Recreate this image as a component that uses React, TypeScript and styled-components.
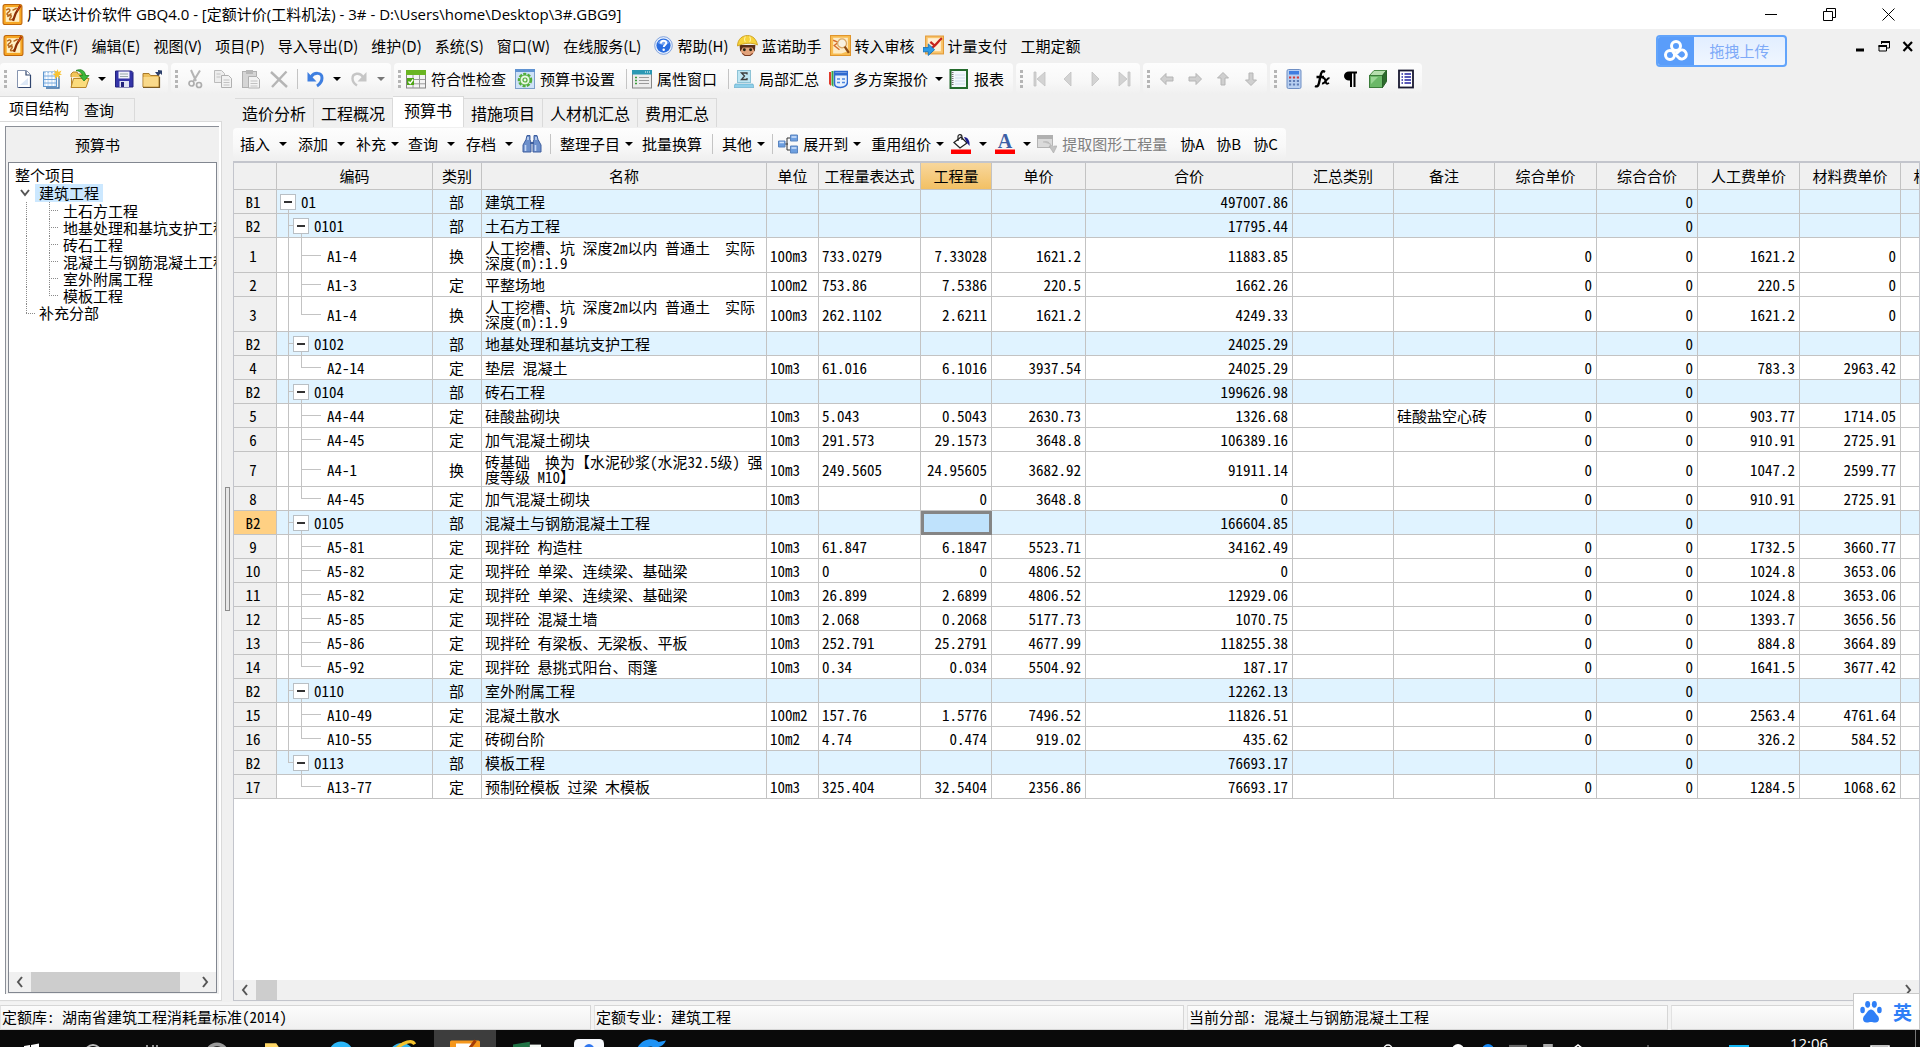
import React from "react";
import styled, { createGlobalStyle, css } from "styled-components";

const UI_FONT = '"Noto Sans CJK SC", "Noto Sans", sans-serif';
const GRID_FONT = '"Noto Sans Mono CJK SC", "Noto Sans CJK SC", monospace';
const LINE = "#c3c3c3";

const Global = createGlobalStyle`
  html, body { margin: 0; padding: 0; }
  body { background: #f0f0f0; color: #000; font: 15px/20px ${UI_FONT}; overflow: hidden; }
  *, *::before, *::after { box-sizing: border-box; }
  button { margin: 0; padding: 0; border: 0; background: none; color: inherit; font: inherit; white-space: nowrap; }
  svg { display: block; flex: none; }
`;

const Shell = styled.div`
  position: relative;
  display: flex;
  flex-direction: column;
  height: 100vh;
  overflow: hidden;
`;

/* ---------- title and menu ---------- */

const TitleBar = styled.header`
  flex: none;
  display: flex;
  align-items: center;
  height: 29px;
  padding-left: 2px;
  background: #fff;
`;
const Title = styled.h1`
  flex: 1;
  margin: 0 0 0 4px;
  padding-bottom: 1px;
  font: 400 15px/28px "Open Sans", ${UI_FONT};
  white-space: pre;
`;
const WindowButton = styled.button`
  display: flex;
  align-items: center;
  justify-content: center;
  width: 59px;
  height: 28px;
`;
const WindowButtons = styled.div`
  display: flex;
  padding-right: 2px;
`;
const MenuBar = styled.nav`
  flex: none;
  display: flex;
  align-items: center;
  height: 34px;
  padding: 0 0 1px 3px;
`;
const MenuItem = styled.button<{ $icon?: boolean }>`
  display: flex;
  align-items: center;
  gap: 4px;
  height: 24px;
  padding: 0 ${(p) => (p.$icon ? "2px" : "7px")} 0 6px;
`;
const MdiButtons = styled.div`
  display: flex;
  gap: 12px;
  margin-left: auto;
  padding-right: 6px;
`;
const MdiButton = styled.button`
  width: 12px;
  height: 14px;
`;
const UploadButton = styled.button`
  position: absolute;
  top: 35px;
  right: 133px;
  display: flex;
  width: 131px;
  height: 32px;
  border: 2px solid #62a4fb;
  border-radius: 4px;
  overflow: hidden;
  background: linear-gradient(#e2eeff, #f0f6ff);
  color: #7eaaf8;
  line-height: 28px;
`;
const UploadMark = styled.span`
  display: flex;
  align-items: center;
  justify-content: center;
  width: 36px;
  height: 28px;
  background: #5a9dfa;
`;
const UploadText = styled.span`
  flex: 1;
  text-align: center;
`;

/* ---------- tool bars ---------- */

const ToolRow = styled.div`
  flex: none;
  display: flex;
  gap: 3px;
  height: 33px;
`;
const ToolGroup = styled.div<{ $flush?: boolean }>`
  display: flex;
  align-items: center;
  height: 31px;
  padding: 0 2px 0 ${(p) => (p.$flush ? "1px" : "2px")};
  border-radius: 4px;
  background: linear-gradient(#fdfdfd, #f8f8f8 60%, #f0f0f0);
`;
const Grip = styled.span`
  width: 8px;
  height: 18px;
  background: repeating-linear-gradient(#b5b5b5 0 3px, transparent 3px 5px) 2px 0 / 3px 100% no-repeat;
`;
const Divider = styled.span`
  width: 8px;
  height: 20px;
  background: linear-gradient(#c4c4c4, #c4c4c4) 4px 0 / 1px 100% no-repeat;
`;
const IconButton = styled.button`
  display: flex;
  align-items: center;
  justify-content: center;
  width: 28px;
  height: 28px;
`;
const CaretButton = styled.button<{ $dim?: boolean }>`
  display: flex;
  align-items: center;
  justify-content: center;
  width: 16px;
  height: 28px;
  color: ${(p) => (p.$dim ? "#777" : "#000")};
`;
const LabelButton = styled.button<{ $dim?: boolean; $menu?: "near" | "far" }>`
  display: flex;
  align-items: center;
  gap: 5px;
  height: 28px;
  padding: 0 ${(p) => (p.$menu ? "4px" : "7px")} 0 2px;
  color: ${(p) => (p.$dim ? "#808080" : "#000")};
  svg:last-child { margin-left: ${(p) => (p.$menu === "far" ? "2px" : "0")}; }
`;
const TextButton = styled.button<{ $menu?: "near" | "far" }>`
  display: flex;
  align-items: center;
  height: 28px;
  padding: 0 ${(p) => (p.$menu ? "0" : "6px")} 0 6px;
  svg { margin: 0 ${(p) => (p.$menu === "far" ? "5px 0 9px" : "3px 0 5px")}; }
`;

/* ---------- body ---------- */

const Body = styled.div`
  flex: 1;
  min-height: 0;
  display: flex;
  padding-bottom: 1px;
`;
const Side = styled.aside`
  flex: none;
  display: flex;
  flex-direction: column;
  width: 222px;
`;
const SideTabs = styled.div`
  display: flex;
  align-items: flex-end;
  height: 25px;
`;
const SideTab = styled.button<{ $active?: boolean }>`
  height: ${(p) => (p.$active ? "25px" : "23px")};
  padding: ${(p) => (p.$active ? "0 9px 2px" : "0 20px 0 5px")};
  border: 1px solid #dadada;
  border-bottom: 0;
  border-left-width: 0;
  background: ${(p) => (p.$active ? "#fff" : "#f0f0f0")};
  font: 15px/20px ${GRID_FONT};
`;
const SidePane = styled.div`
  flex: 1;
  min-height: 0;
  display: flex;
  padding: 4px 2px 6px 5px;
  border: 1px solid #dadada;
  border-left: 0;
  background: #fff;
`;
const SideInner = styled.div`
  flex: 1;
  min-width: 0;
  display: flex;
  flex-direction: column;
  padding: 0 2px 1px 2px;
  border-left: 1px solid #8b8f97;
  border-top: 1px solid #8b8f97;
  background: #f0f0f0;
`;
const SideHeading = styled.h2`
  flex: none;
  margin: 0;
  padding-right: 30px;
  font: 400 15px/35px ${UI_FONT};
  text-align: center;
`;
const TreeBox = styled.div`
  flex: 1;
  display: flex;
  flex-direction: column;
  min-height: 0;
  border: 1px solid #828790;
  background: #fff;
  font: 15px/18px ${GRID_FONT};
`;
const Tree = styled.ul`
  flex: 1;
  margin: 0;
  padding: 3px 0 0;
  overflow: hidden;
  list-style: none;
`;
const dots = (dir: string) => `repeating-linear-gradient(${dir}, #8a8a8a 0 1px, transparent 1px 2px)`;
const TreeRow = styled.li<{ $level: number; $last?: boolean }>`
  display: flex;
  height: ${(p) => (p.$level === 2 ? "17px" : "18px")};
  line-height: ${(p) => (p.$level === 2 ? "17px" : "18px")};
  padding-left: ${(p) => [2, 26, 50][p.$level]}px;
  white-space: nowrap;
  ${(p) =>
    p.$level === 1 && p.$last && css`
      background: ${dots("180deg")} 17px 0 / 1px 50% no-repeat, ${dots("90deg")} 17px 50% / 10px 1px no-repeat;
    `}
  ${(p) =>
    p.$level === 2 && css`
      background: ${dots("180deg")} 17px 0 / 1px 100% no-repeat,
        ${dots("180deg")} 40px 0 / 1px ${p.$last ? "50%" : "100%"} no-repeat,
        ${dots("90deg")} 40px 50% / 10px 1px no-repeat;
    `}
`;
const TreeLabel = styled.button<{ $selected?: boolean }>`
  height: 100%;
  padding: 0 4px;
  line-height: inherit;
  background: ${(p) => (p.$selected ? "#cce8ff" : "transparent")};
`;
const TreeOpener = styled.button`
  width: 14px;
  margin-left: -16px;
  margin-right: 2px;
`;
const ScrollBar = styled.div`
  flex: none;
  display: flex;
  align-items: center;
  height: 20px;
  background: #f0f0f0;
`;
const ScrollArrow = styled.button<{ $end?: boolean }>`
  display: flex;
  align-items: center;
  justify-content: center;
  width: 22px;
  height: 20px;
  margin-left: ${(p) => (p.$end ? "auto" : "0")};
`;
const ScrollThumb = styled.div<{ $share: string }>`
  width: ${(p) => p.$share};
  height: 100%;
  background: #cdcdcd;
`;
const Splitter = styled.div`
  flex: none;
  display: flex;
  align-items: center;
  justify-content: center;
  width: 11px;
`;
const SplitHandle = styled.div`
  width: 5px;
  height: 124px;
  border: 1px solid #8c8c8c;
  background: #e6e6e6;
`;
const Main = styled.main`
  flex: 1;
  min-width: 0;
  display: flex;
  flex-direction: column;
`;
const MainTabs = styled.div`
  flex: none;
  display: flex;
  align-items: flex-end;
  height: 31px;
  margin-bottom: 1px;
  padding-left: 2px;
`;
const MainTab = styled.button<{ $active?: boolean }>`
  height: ${(p) => (p.$active ? "31px" : "29px")};
  padding: ${(p) => (p.$active ? "0 11px 5px" : "0 7px")};
  border: 1px solid #dadada;
  border-left-width: 0;
  border-bottom: 0;
  background: ${(p) => (p.$active ? "#fff" : "#f0f0f0")};
  font: 16px/20px ${UI_FONT};
`;

/* ---------- grid ---------- */

const GridFrame = styled.section`
  flex: 1;
  min-height: 0;
  display: flex;
  flex-direction: column;
  border: 1px solid #c3c5cc;
  border-top-width: 2px;
  background: #fff;
`;
const GridView = styled.div`
  flex: 1;
  min-height: 0;
  overflow: hidden;
`;
const Sheet = styled.table`
  table-layout: fixed;
  width: 1768px;
  border-spacing: 0;
  font: 15px/15px ${GRID_FONT};
  white-space: pre;
`;
const HeadCell = styled.th<{ $active?: boolean }>`
  height: 27px;
  padding: 0 0 1px;
  border-right: 1px solid ${LINE};
  border-bottom: 1px solid ${LINE};
  background: ${(p) => (p.$active ? "linear-gradient(#f8d79c, #f2c064)" : "#f0f0f0")};
  font-weight: 400;
  text-align: center;
`;
const Row = styled.tr<{ $section?: boolean; $tall?: boolean }>`
  height: ${(p) => (p.$tall ? "35px" : "24px")};
  background: ${(p) => (p.$section ? "#e0f3ff" : "#fff")};
`;
const Cell = styled.td<{ $align?: string; $selected?: boolean }>`
  padding: 0 4px 0 3px;
  border-right: 1px solid ${LINE};
  border-bottom: 1px solid ${LINE};
  text-align: ${(p) => p.$align || "left"};
  overflow: hidden;
  ${(p) =>
    p.$selected && css`
      background: #bfe2fc;
      outline: 3px solid #858585;
      outline-offset: -3px;
    `}
`;
const RowHead = styled.th<{ $current?: boolean }>`
  padding: 0 4px 0 0;
  border-right: 1px solid ${LINE};
  border-bottom: 1px solid ${LINE};
  background: ${(p) => (p.$current ? "#ffd083" : "#f0f0f0")};
  font-weight: 400;
  text-align: center;
`;
const bar = `linear-gradient(${LINE}, ${LINE})`;
const branches: Record<string, string> = {
  root: `${bar} 11px 100% / 1px 50% no-repeat`,
  section: `${bar} 11px 0 / 1px 100% no-repeat, ${bar} 11px 50% / 6px 1px no-repeat, ${bar} 24px 100% / 1px 50% no-repeat`,
  sectionEnd: `${bar} 11px 0 / 1px 50% no-repeat, ${bar} 11px 50% / 6px 1px no-repeat, ${bar} 24px 100% / 1px 50% no-repeat`,
  leaf: `${bar} 11px 0 / 1px 100% no-repeat, ${bar} 24px 0 / 1px 100% no-repeat, ${bar} 24px 50% / 20px 1px no-repeat`,
  leafEnd: `${bar} 11px 0 / 1px 100% no-repeat, ${bar} 24px 0 / 1px 50% no-repeat, ${bar} 24px 50% / 20px 1px no-repeat`,
  last: `${bar} 24px 0 / 1px 50% no-repeat, ${bar} 24px 50% / 20px 1px no-repeat`,
};
const CodeCell = styled.td<{ $branch: string }>`
  padding: 0 0 0 ${(p) => (p.$branch === "root" ? 3 : p.$branch.startsWith("section") ? 16 : 50)}px;
  border-right: 1px solid ${LINE};
  border-bottom: 1px solid ${LINE};
  background: ${(p) => branches[p.$branch]};
`;
const CodeLine = styled.div`
  display: flex;
  align-items: center;
  gap: 5px;
`;
const Fold = styled.button`
  display: flex;
  align-items: center;
  justify-content: center;
  width: 16px;
  height: 16px;
  border: 1px solid #b9bfc4;
  background: #fff;
`;

/* ---------- status and task bar ---------- */

const StatusBar = styled.footer`
  flex: none;
  display: grid;
  grid-template-columns: 591px 590px 481px 1fr;
  gap: 3px;
  height: 28px;
  padding-top: 3px;
  background: #f3f3f3;
  font: 15px/22px ${GRID_FONT};
`;
const StatusCell = styled.div`
  padding-left: 1px;
  border: 1px solid #d6d6d6;
  border-left-color: #e2e2e2;
  background: linear-gradient(#fcfcfc, #f0f0f0);
  white-space: pre;
`;
const TaskBar = styled.div`
  flex: none;
  display: flex;
  align-items: flex-start;
  height: 17px;
  overflow: hidden;
  background: #0a0a0a;
  color: #fff;
`;
const Task = styled.button<{ $active?: boolean }>`
  display: flex;
  justify-content: center;
  width: 62px;
  height: 17px;
  padding-top: 9px;
  overflow: hidden;
  background: ${(p) => (p.$active ? "#3d3d3d" : "transparent")};
`;
const Tray = styled.div`
  display: flex;
  align-items: flex-start;
  margin-left: auto;
`;
const traySizes = { normal: "30px", wide: "71px", loose: "110px" };
const TrayItem = styled.button<{ $size?: keyof typeof traySizes }>`
  display: flex;
  justify-content: center;
  width: ${(p) => traySizes[p.$size || "normal"]};
  height: 17px;
  padding-top: 14px;
  overflow: hidden;
`;
const Clock = styled.time`
  width: 70px;
  padding-top: 6px;
  font: 15px/14px "Open Sans", ${UI_FONT};
  text-align: center;
`;
const DesktopEdge = styled.span`
  width: 5px;
  height: 17px;
  border-left: 1px solid #777;
`;
const ImeBox = styled.div`
  position: absolute;
  right: 0;
  bottom: 17px;
  display: flex;
  align-items: center;
  gap: 11px;
  width: 67px;
  height: 37px;
  padding-left: 6px;
  border: 1px solid #c9c9c9;
  background: #fff;
  color: #2f7ff7;
  font: 700 19px/35px ${UI_FONT};
`;

/* ---------- icons ---------- */

const Svg = ({ children, s = 20 }: { children: React.ReactNode; s?: number }) => (
  <svg width={s} height={s} viewBox="0 0 20 20" fill="none" aria-hidden="true">{children}</svg>
);
const Caret = () => (
  <svg width="8" height="4" viewBox="0 0 8 4" aria-hidden="true"><path d="M0 0h8L4 4z" fill="currentColor" /></svg>
);
const Chevron = ({ d }: { d: string }) => (
  <svg width="12" height="12" viewBox="0 0 12 12" fill="none" aria-hidden="true"><path d={d} stroke="#555" strokeWidth="2" /></svg>
);
const LogoIcon = () => (
  <Svg s={21}>
    <rect x="1" y="0.500" width="18" height="19" rx="2" fill="#f6a623" stroke="#c0660a" />
    <rect x="3.500" y="3" width="13" height="14" fill="#fff0c4" />
    <path d="M4 6c3-3 5 0 2 2s0 4 3 1M5 12c3-2 5-1 3 1s0 3 3 1M10 6l4-2" stroke="#b5651d" strokeWidth="1.400" />
    <path d="M17.500 1.500L13 9l-2.500 7" stroke="#8a2f06" strokeWidth="2.200" />
    <path d="M17.500 1.500l-3 5" stroke="#d9480f" strokeWidth="1" />
  </Svg>
);
const HelpIcon = () => (
  <Svg s={19}>
    <circle cx="10" cy="10" r="9.300" fill="#e9f1fd" stroke="#7c9fdc" />
    <circle cx="10" cy="10" r="7.500" fill="#2a6de0" />
    <path d="M4 7a7 6 0 0 1 12 0c-3 3-9 3-12 0" fill="#77a6f3" />
    <path d="M7.300 7.800c0-3.600 5.600-3.600 5.600-.4 0 2-2.600 2-2.600 4.200" stroke="#fff" strokeWidth="2" />
    <circle cx="10.200" cy="14.400" r="1.300" fill="#fff" />
  </Svg>
);
const WorkerIcon = () => (
  <Svg s={21}>
    <path d="M3.500 10h13v4c0 4-3 5.500-6.500 5.500s-6.500-1.500-6.500-5.500z" fill="#e2a27a" />
    <path d="M2.500 9.500h15L17 16l-2.500-4h-9L3 16z" fill="#5a2c16" />
    <path d="M.5 10.500C.5 4 5 .5 10 .5s8.500 3.500 9.500 9c-5-2.500-13-2-19 1z" fill="#f7d23a" stroke="#c99a14" strokeWidth=".8" />
    <path d="M8 1.500c-1 2-1 4 0 5M12 1.500c1 2 1 4 0 5" stroke="#fff2a0" />
    <circle cx="7" cy="14" r="1.400" fill="#221" /><circle cx="13" cy="14" r="1.400" fill="#221" />
    <path d="M5 17.500l2.500 2h5l2.500-2" stroke="#7a3a20" />
  </Svg>
);
const AuditIcon = () => (
  <Svg s={21}>
    <rect x=".5" y=".5" width="19" height="19" fill="#f8bd52" stroke="#e0952c" />
    <path d="M3 2.500h14v13l-6 2H3z" fill="#fdebc5" />
    <path d="M3 5l5 2-4 3 5 4" stroke="#d66b2c" strokeWidth="1.300" />
    <circle cx="11.500" cy="8" r="4.200" fill="#f7f1e2" stroke="#d9a866" strokeWidth="1.200" />
    <path d="M14 11l4 6" stroke="#8c4b14" strokeWidth="2.200" />
  </Svg>
);
const PayIcon = () => (
  <Svg s={21}>
    <rect x="2.500" y="1" width="17" height="17" fill="#f9c46b" stroke="#e39a35" />
    <path d="M4.500 3h12.500v12.500H4.500z" fill="#fff0d4" />
    <path d="M7 6.500l4 3.500M8 12c3 0 6-6 10-9" stroke="#c5241c" strokeWidth="2.200" />
    <path d="M0 12h5V8.500l6 5.500-6 5.500V16H0z" fill="#2d9be6" stroke="#0f6db5" strokeWidth=".8" />
  </Svg>
);
const NewIcon = () => (
  <Svg>
    <path d="M3.500 1.500h9l4 4v13h-13z" fill="#fff" stroke="#8795b0" />
    <path d="M12 2v4h4M16.500 6v12.500h-12" stroke="#31466f" strokeWidth="1.200" />
    <path d="M6 16l8-7v7z" fill="#dde8f6" />
  </Svg>
);
const NewSheetIcon = () => (
  <Svg>
    <rect x="1.500" y="3" width="13" height="14.500" fill="#d5e6f8" stroke="#5f97cf" />
    <path d="M4.500 3v14M8 3v14M11.500 3v14" stroke="#fff" strokeWidth="1.500" /><path d="M2 7h12M2 10.500h12M2 14h12" stroke="#77a8db" />
    <path d="M4 19h13V7" stroke="#3a6ea5" strokeWidth="1.300" />
    <path d="M15.500 0l1 3 3-1.500-1.500 3 2 1-3 .8L18 10l-2.500-2.500L13 10V6.500L10.500 5l3-.8L12 1l2.700 1.800z" fill="#f8c332" />
  </Svg>
);
const OpenIcon = () => (
  <Svg>
    <path d="M1 8V5l2-2h4l1 2h7v4" fill="#f3c65a" stroke="#b8862a" />
    <path d="M1 18.500L3.500 9.500H19l-3 9z" fill="#fbdc7c" stroke="#b8862a" />
    <path d="M1.500 8.500v9" stroke="#b8862a" />
    <path d="M6 1.500c5-2 9 0 9.500 5H19l-5 5.500-4.500-5.500h3C12 4 10 2 6 1.500z" fill="#3db93a" stroke="#1d7d20" strokeWidth=".8" />
  </Svg>
);
const SaveIcon = () => (
  <Svg>
    <path d="M1.500 2h16l1.500 1.500V18H1.500z" fill="#3434a8" stroke="#22227c" />
    <rect x="4.500" y="2.500" width="11" height="7" fill="#f2f3fa" />
    <path d="M6 5h8M6 7.500h8" stroke="#9aa" />
    <rect x="5.500" y="12" width="9.500" height="6" fill="#dfe2f2" /><rect x="7" y="13" width="3" height="5" fill="#22227c" />
  </Svg>
);
const CloseFolderIcon = () => (
  <Svg>
    <path d="M1 4.500h6l1.500 2H17V18H1z" fill="#eec05c" stroke="#a8792a" />
    <path d="M1.500 8h15v9.500h-15z" fill="#f9d98a" /><path d="M1 18.500h16.500V8" stroke="#7b5a22" strokeWidth="1.200" />
    <path d="M13 3h3V1l4 .5V6l-1.500-1.500L16 7z" fill="#2c3f6b" />
  </Svg>
);
const CutIcon = () => (
  <Svg>
    <path d="M6 1l5 11M15 1.500L8.500 12" stroke="#b5b5b5" strokeWidth="2" />
    <circle cx="6.500" cy="14.500" r="2.500" stroke="#adadad" strokeWidth="1.700" /><circle cx="14" cy="16" r="2.500" stroke="#adadad" strokeWidth="1.700" />
  </Svg>
);
const CopyIcon = () => (
  <Svg>
    <path d="M1.500 1.500h7l3 3v9h-10z" fill="#ededed" stroke="#bbb" /><path d="M8.500 6.500h7l3 3v9h-10z" fill="#f2f2f2" stroke="#b0b0b0" />
    <path d="M10.500 11h6M10.500 13.500h6M10.500 16h6M3.500 5h4M3.500 8h4" stroke="#c2c2c2" />
  </Svg>
);
const PasteIcon = () => (
  <Svg>
    <rect x="1.500" y="2.500" width="14" height="16" fill="#d5d5d5" stroke="#b0b0b0" /><path d="M5 1h7v4H5z" fill="#b8b8b8" />
    <path d="M7.500 7.500h8l3 3v8.500h-11z" fill="#f3f3f3" stroke="#b0b0b0" /><path d="M9.500 12h7M9.500 14.500h7M9.500 17h7" stroke="#c2c2c2" />
  </Svg>
);
const DeleteIcon = () => (<Svg><path d="M2 3l16 15M17.500 2.500L3 18" stroke="#b5b5b5" strokeWidth="2.400" /></Svg>);
const UndoIcon = () => (
  <Svg>
    <path d="M6 8c3-5 11-5 11 1 0 4-2 6-5 8" stroke="#3f7fe0" strokeWidth="3" />
    <path d="M2.500 3v9.500h9z" fill="#3f7fe0" />
  </Svg>
);
const RedoIcon = () => (
  <Svg>
    <path d="M14 8C11 3 3.500 4 3.500 9.500c0 3 1.500 5 4.500 7" stroke="#c6c6c6" strokeWidth="2.400" />
    <path d="M17.500 3v9.500h-9z" fill="#c6c6c6" />
  </Svg>
);
const CheckTableIcon = () => (
  <Svg>
    <rect x=".5" y="1.500" width="19" height="17.500" fill="#f4f4f4" stroke="#858585" />
    <rect x="0" y="1" width="20" height="5" fill="#6ab522" />
    <path d="M7 6v13M13.500 6v13M1 10.500h18M1 14.800h18" stroke="#9a9a9a" />
    <rect x="1" y="9" width="7" height="7" fill="#4fa616" /><path d="M2.500 12.500l1.700 2 3-4" stroke="#fff" strokeWidth="1.400" />
  </Svg>
);
const SettingIcon = () => (
  <Svg>
    <rect x=".5" y=".5" width="19" height="19" fill="#cfe2f8" stroke="#7d9fc9" /><rect x="0" y="0" width="20" height="3" fill="#5f93d2" />
    <circle cx="10" cy="11" r="6" stroke="#51ae3a" strokeWidth="2.500" strokeDasharray="3 1.300" />
    <circle cx="10" cy="11" r="5" fill="#eaf8e4" stroke="#51ae3a" /><circle cx="10" cy="11" r="2" stroke="#51ae3a" strokeWidth="1.200" />
  </Svg>
);
const PropertyIcon = () => (
  <Svg>
    <rect x=".5" y="1.500" width="19" height="17.500" fill="#ececec" stroke="#868686" /><rect x="0" y="1" width="20" height="4.500" fill="#2b98b4" />
    <path d="M13 3h1M15 3h1M17 3h1" stroke="#fff" /><path d="M3 8.500h2M3 11.500h2M3 14.500h2" stroke="#3a9c3a" strokeWidth="1.500" />
    <path d="M7 8.500h10M7 11.500h10M7 14.500h10" stroke="#9a9a9a" />
  </Svg>
);
const SumIcon = () => (
  <Svg>
    <rect x="3.500" y="1.500" width="13" height="12" fill="#bfe6f3" stroke="#8ec3d6" /><path d="M1 15h18l1 3.500H0z" fill="#8fd0ea" stroke="#5aa6c8" strokeWidth=".6" />
    <path d="M13 5.500V4H7.500l3 3-3 3.500H13V9" stroke="#3c3c3c" strokeWidth="1.300" />
  </Svg>
);
const PlansIcon = () => (
  <Svg>
    <path d="M1 3v12l2 2V3z" fill="#e23a2c" /><path d="M3.500 2v14l2 2V2z" fill="#38a845" />
    <path d="M6.500 2.500h13V13c0 4-3 5-7 5.500-4 0-6-1.500-6-4z" fill="#e8f1fd" stroke="#2f6ad0" strokeWidth="1.500" />
    <path d="M6 5h13" stroke="#2f6ad0" strokeWidth="3" /><path d="M9 10h3M14 10h3M9 13.500h3M14 13.500h3" stroke="#4b86e0" strokeWidth="1.600" />
  </Svg>
);
const ReportIcon = () => (
  <Svg>
    <rect x="1.500" y="1" width="16.500" height="18" fill="#f2f8fb" stroke="#256b2d" strokeWidth="2" />
    <path d="M3.500 3v14" stroke="#777" strokeDasharray="1 1" strokeWidth="2" /><path d="M6 6h10M6 9h10M6 12h10M6 15h10" stroke="#cfdcea" />
  </Svg>
);
const Grey = ({ d }: { d: string }) => (<Svg><path d={d} fill="#d3d3d3" stroke="#c2c2c2" strokeWidth=".8" /></Svg>);
const ArrowIcon = ({ turn }: { turn: number }) => (
  <Svg><path d="M3.500 10l5.500-5.500v3.500h7v4H9v3.500z" transform={`rotate(${turn} 10 10)`} fill="#cfcfcf" stroke="#b5b5b5" /></Svg>
);
const CalcIcon = () => (
  <Svg>
    <rect x="3" y=".5" width="14" height="19" rx="1.500" fill="#b9d0f1" stroke="#6f8fc4" /><rect x="5" y="2" width="10" height="3.500" fill="#3f7de0" />
    <path d="M5 8.500h10" stroke="#d23c3c" strokeWidth="1.800" strokeDasharray="2.200 1.700" />
    <path d="M5 12h10M5 15.500h10" stroke="#5f7db5" strokeWidth="1.800" strokeDasharray="2.200 1.700" />
  </Svg>
);
const FxIcon = () => (
  <Svg>
    <path d="M13 3c-3-2-4 1-4.500 4L7 14c-.6 3-2 4-4 3M4.500 8H12" stroke="#000" strokeWidth="2.400" />
    <path d="M10.500 9.500c2-1 2.500 0 3 2.500s1 3.500 3.500 2M17.500 9c-3 0-4.500 6-7.500 5.500" stroke="#000" strokeWidth="2" />
  </Svg>
);
const ParaIcon = () => (
  <Svg><path d="M17 2.500H9a5 4.500 0 0 0 0 9h1V18h2V4.500h1.500V18h2V4.500H17z" fill="#000" /></Svg>
);
const CubeIcon = () => (
  <Svg>
    <path d="M1.500 6.500L6 1.500h12.500L14.500 6.500z" fill="#b6dfae" stroke="#4b8d48" /><rect x="1.500" y="6.500" width="13" height="12" fill="#6bb868" stroke="#3c7d3b" />
    <path d="M14.500 6.500l4-5v11l-4 6z" fill="#2c6b2c" stroke="#285f28" /><path d="M3 8h7L3 15z" fill="#9ad695" />
  </Svg>
);
const ListIcon = () => (
  <Svg>
    <rect x="3" y="1.500" width="14" height="17" fill="#fff" stroke="#181830" strokeWidth="1.800" />
    <path d="M5.500 5h1.500M5.500 8h1.500M5.500 11h1.500M5.500 14h1.500M8.500 5h6.500M8.500 8h6.500M8.500 11h6.500M8.500 14h6.500" stroke="#2222a0" strokeWidth="1.700" />
  </Svg>
);
const FindIcon = () => (
  <Svg>
    <path d="M5 1.500h3v4l1 3V18H1v-7l3-5.500zM15 1.500h-3v4l-1 3V18H19v-7l-3-5.500z" fill="#6c8fcb" stroke="#3f5f9f" />
    <path d="M8 9h4" stroke="#3f5f9f" strokeWidth="2" /><path d="M3.500 11v6M13.500 11v6M6 3v3M14 3v3" stroke="#c4d6f5" strokeWidth="1.600" />
  </Svg>
);
const ExpandIcon = () => (
  <Svg>
    <path d="M6 10h4M9 4v12M9 4h4M9 16h4" stroke="#333" />
    <path d="M.5 7h6.500v6H.5zM12.500 1h7v6h-7zM12.500 12h7v7h-7z" fill="#6d9fe0" stroke="#5a84bf" />
    <path d="M1.500 8.500h4.500M13.500 3h5M13.500 14h5" stroke="#d2e4fb" strokeWidth="1.500" />
  </Svg>
);
const FillIcon = () => (
  <Svg>
    <rect x="0" y="15.500" width="20" height="4.500" fill="#f00" />
    <path d="M3 8.500l7-5.500 6 6-7 5z" fill="#fff" stroke="#222" strokeWidth="1.300" /><path d="M7 7V2.500C7 0 11 0 11 3v3" stroke="#222" strokeWidth="1.200" />
    <path d="M13 3c4 0 6 4 5.500 9l-3-4z" fill="#1b1b8c" />
  </Svg>
);
const FontLetter = styled.text`
  font: 700 20px "Liberation Serif", serif;
  fill: #3c5fa5;
`;
const FontIcon = () => (
  <Svg>
    <rect x="0" y="15.500" width="20" height="4.500" fill="#f00" />
    <FontLetter x="10" y="14" textAnchor="middle">A</FontLetter>
  </Svg>
);
const ExtractIcon = () => (
  <Svg>
    <rect x=".5" y="1.500" width="15" height="12" fill="#dadada" stroke="#b3b3b3" /><rect x="0" y="1" width="16" height="4" fill="#b0b0b0" />
    <path d="M6 8c4-1 7 0 8 4h-2l4.500 7 3.500-7h-3" fill="#c3c3c3" stroke="#aaa" strokeWidth=".6" />
  </Svg>
);
const CloudMark = () => (
  <svg width="26" height="24" viewBox="0 0 26 24" fill="none" stroke="#fff" strokeWidth="3" aria-hidden="true">
    <circle cx="13" cy="7" r="4.500" /><circle cx="7" cy="16" r="4.500" /><path d="M10 13l6 6a4.500 4.500 0 1 0 0-7l-3 3" />
  </svg>
);
const Paw = () => (
  <svg width="22" height="24" viewBox="0 0 23 24" fill="#2f7ff7" aria-hidden="true">
    <ellipse cx="8" cy="4" rx="2.600" ry="3.600" /><ellipse cx="15" cy="4" rx="2.600" ry="3.600" /><ellipse cx="2.700" cy="10" rx="2.400" ry="3.400" />
    <ellipse cx="20.300" cy="10" rx="2.400" ry="3.400" /><path d="M11.500 9.500c3 0 4.500 4 7 6.500s1.500 7-2.500 7c-2 0-3-.5-4.500-.5s-2.500.5-4.500.5c-4 0-5-4.500-2.500-7s4-6.500 7-6.500z" />
  </svg>
);
const taskIcons = [
  <Svg key="w" s={20}><path d="M3 7l6-1v6H3zM10 6l8-1.500V12h-8z" fill="#fff" /></Svg>,
  <Svg key="s" s={20}><circle cx="10" cy="14" r="8" stroke="#bbb" strokeWidth="2" /></Svg>,
  <Svg key="v" s={20}><path d="M2 6v9M8 6v9M12 6v9M18 8v7" stroke="#eee" strokeWidth="1.200" /></Svg>,
  <Svg key="c" s={24}><circle cx="10" cy="13" r="8.500" stroke="#999" strokeWidth="3" /></Svg>,
  <Svg key="f" s={28}><path d="M0 3h8l2 3h9v12H0z" fill="#ffd766" /><path d="M4 8h15v10H4z" fill="#fff0b8" /></Svg>,
  <Svg key="q" s={24}><circle cx="10" cy="12" r="10" fill="#2cb6f7" /></Svg>,
  <Svg key="e" s={26}><circle cx="9" cy="13" r="8" stroke="#36b5ea" strokeWidth="4" /><path d="M2 12C5 5 16-1 19 4" stroke="#f5c32c" strokeWidth="2.500" /></Svg>,
  <Svg key="g" s={30}><rect x="0" y="1" width="20" height="18" rx="1" fill="#f5971d" /><path d="M4 3h11v6H4z" fill="#fff" /><path d="M17 1l-6 8" stroke="#a43c07" strokeWidth="2" /></Svg>,
  <Svg key="x" s={28}><path d="M0 4l12-2v16H0z" fill="#1f7244" /><path d="M12 4h8v14h-8z" fill="#f3f8f4" /></Svg>,
  <Svg key="b" s={30}><rect x="0" y="0" width="20" height="20" rx="3" fill="#f7f9fd" /><circle cx="10" cy="7" r="3.600" fill="#2f76ef" /></Svg>,
  <Svg key="i" s={30}><path d="M0 8C3-1 12-1 15 2l5-1c-2 5-7 5-10 4-5 0-7 4-8 9z" fill="#1e93f5" /></Svg>,
];

/* ---------- data ---------- */

type Item = {
  id: string; branch: string; code: string; kind: string; name: string;
  unit?: string; expr?: string; qty?: string; price?: string; total: string;
  note?: string; labor?: string; material?: string; current?: boolean;
};
const section = (id: string, branch: string, code: string, name: string, total: string, current = false): Item =>
  ({ id, branch, code, kind: "部", name, total, current });
const item = (
  id: string, branch: string, code: string, kind: string, name: string, unit: string, expr: string,
  qty: string, price: string, total: string, labor: string, material: string, note = "",
): Item => ({ id, branch, code, kind, name, unit, expr, qty, price, total, labor, material, note });

const trench = "人工挖槽、坑 深度2m以内 普通土  实际\n深度(m):1.9";
const rows: Item[] = [
  section("B1", "root", "01", "建筑工程", "497007.86"),
  section("B2", "section", "0101", "土石方工程", "17795.44"),
  item("1", "leaf", "A1-4", "换", trench, "100m3", "733.0279", "7.33028", "1621.2", "11883.85", "1621.2", "0"),
  item("2", "leaf", "A1-3", "定", "平整场地", "100m2", "753.86", "7.5386", "220.5", "1662.26", "220.5", "0"),
  item("3", "leafEnd", "A1-4", "换", trench, "100m3", "262.1102", "2.6211", "1621.2", "4249.33", "1621.2", "0"),
  section("B2", "section", "0102", "地基处理和基坑支护工程", "24025.29"),
  item("4", "leafEnd", "A2-14", "定", "垫层 混凝土", "10m3", "61.016", "6.1016", "3937.54", "24025.29", "783.3", "2963.42"),
  section("B2", "section", "0104", "砖石工程", "199626.98"),
  item("5", "leaf", "A4-44", "定", "硅酸盐砌块", "10m3", "5.043", "0.5043", "2630.73", "1326.68", "903.77", "1714.05", "硅酸盐空心砖"),
  item("6", "leaf", "A4-45", "定", "加气混凝土砌块", "10m3", "291.573", "29.1573", "3648.8", "106389.16", "910.91", "2725.91"),
  item("7", "leaf", "A4-1", "换", "砖基础  换为【水泥砂浆(水泥32.5级) 强\n度等级 M10】", "10m3", "249.5605", "24.95605", "3682.92", "91911.14", "1047.2", "2599.77"),
  item("8", "leafEnd", "A4-45", "定", "加气混凝土砌块", "10m3", "", "0", "3648.8", "0", "910.91", "2725.91"),
  section("B2", "section", "0105", "混凝土与钢筋混凝土工程", "166604.85", true),
  item("9", "leaf", "A5-81", "定", "现拌砼 构造柱", "10m3", "61.847", "6.1847", "5523.71", "34162.49", "1732.5", "3660.77"),
  item("10", "leaf", "A5-82", "定", "现拌砼 单梁、连续梁、基础梁", "10m3", "0", "0", "4806.52", "0", "1024.8", "3653.06"),
  item("11", "leaf", "A5-82", "定", "现拌砼 单梁、连续梁、基础梁", "10m3", "26.899", "2.6899", "4806.52", "12929.06", "1024.8", "3653.06"),
  item("12", "leaf", "A5-85", "定", "现拌砼 混凝土墙", "10m3", "2.068", "0.2068", "5177.73", "1070.75", "1393.7", "3656.56"),
  item("13", "leaf", "A5-86", "定", "现拌砼 有梁板、无梁板、平板", "10m3", "252.791", "25.2791", "4677.99", "118255.38", "884.8", "3664.89"),
  item("14", "leafEnd", "A5-92", "定", "现拌砼 悬挑式阳台、雨篷", "10m3", "0.34", "0.034", "5504.92", "187.17", "1641.5", "3677.42"),
  section("B2", "section", "0110", "室外附属工程", "12262.13"),
  item("15", "leaf", "A10-49", "定", "混凝土散水", "100m2", "157.76", "1.5776", "7496.52", "11826.51", "2563.4", "4761.64"),
  item("16", "leafEnd", "A10-55", "定", "砖砌台阶", "10m2", "4.74", "0.474", "919.02", "435.62", "326.2", "584.52"),
  section("B2", "sectionEnd", "0113", "模板工程", "76693.17"),
  item("17", "last", "A13-77", "定", "预制砼模板 过梁 木模板", "10m3", "325.404", "32.5404", "2356.86", "76693.17", "1284.5", "1068.62"),
];
const columns: [string, number][] = [
  ["", 43], ["编码", 156], ["类别", 49], ["名称", 285], ["单位", 52], ["工程量表达式", 102], ["工程量", 71], ["单价", 94],
  ["合价", 207], ["汇总类别", 101], ["备注", 101], ["综合单价", 102], ["综合合价", 101], ["人工费单价", 102], ["材料费单价", 101], ["机械费单价", 101],
];
const tree: [string, number, boolean?][] = [
  ["整个项目", 0], ["建筑工程", 1], ["土石方工程", 2], ["地基处理和基坑支护工程", 2], ["砖石工程", 2],
  ["混凝土与钢筋混凝土工程", 2], ["室外附属工程", 2], ["模板工程", 2, true], ["补充分部", 1, true],
];
const menus = ["文件(F)", "编辑(E)", "视图(V)", "项目(P)", "导入导出(D)", "维护(D)", "系统(S)", "窗口(W)", "在线服务(L)"];

const SheetRow = ({ r }: { r: Item }) => {
  const isSection = r.kind === "部";
  return (
    <Row $section={isSection} $tall={r.name.includes("\n")}>
      <RowHead scope="row" $current={r.current}>{r.id}</RowHead>
      <CodeCell $branch={r.branch}>
        <CodeLine>{isSection && <Fold aria-label="折叠"><svg width="8" height="2" aria-hidden="true"><path d="M0 1h8" stroke="#333" strokeWidth="2" /></svg></Fold>}{r.code}</CodeLine>
      </CodeCell>
      <Cell $align="center">{r.kind}</Cell>
      <Cell>{r.name}</Cell>
      <Cell>{r.unit}</Cell>
      <Cell>{r.expr}</Cell>
      <Cell $align="right" $selected={r.current}>{r.qty}</Cell>
      <Cell $align="right">{r.price}</Cell>
      <Cell $align="right">{r.total}</Cell>
      <Cell />
      <Cell>{r.note}</Cell>
      <Cell $align="right">{isSection ? "" : "0"}</Cell>
      <Cell $align="right">0</Cell>
      <Cell $align="right">{r.labor}</Cell>
      <Cell $align="right">{r.material}</Cell>
      <Cell />
    </Row>
  );
};

export default function App() {
  return (
    <Shell>
      <Global />
      <TitleBar>
        <LogoIcon />
        <Title>{"广联达计价软件 GBQ4.0 - [定额计价(工料机法) - 3# - D:\\Users\\home\\Desktop\\3#.GBG9]"}</Title>
        <WindowButtons>
          <WindowButton aria-label="最小化"><svg width="12" height="12" stroke="#000"><path d="M0 5.500h12" /></svg></WindowButton>
          <WindowButton aria-label="还原"><svg width="13" height="13" stroke="#000" fill="none"><path d="M.5 3.500h9v9h-9zM3.500 3V.5h9v9H10" /></svg></WindowButton>
          <WindowButton aria-label="关闭"><svg width="13" height="13" stroke="#000"><path d="M.5.5l12 12M12.500.5l-12 12" /></svg></WindowButton>
        </WindowButtons>
      </TitleBar>
      <MenuBar>
        <LogoIcon />
        {menus.map((m) => <MenuItem key={m}>{m}</MenuItem>)}
        <MenuItem $icon><HelpIcon />帮助(H)</MenuItem>
        <MenuItem $icon><WorkerIcon />蓝诺助手</MenuItem>
        <MenuItem $icon><AuditIcon />转入审核</MenuItem>
        <MenuItem><PayIcon />计量支付</MenuItem>
        <MenuItem>工期定额</MenuItem>
        <MdiButtons>
          <MdiButton aria-label="最小化窗口"><svg width="12" height="14"><path d="M2 11h8" stroke="#000" strokeWidth="3" /></svg></MdiButton>
          <MdiButton aria-label="还原窗口"><svg width="12" height="14" fill="none" stroke="#000"><path d="M1 6.500h7.500v5.500H1zM3.500 5V2.500h8V9H9" /><path d="M.5 7h8.500M3 3h9" strokeWidth="2" /></svg></MdiButton>
          <MdiButton aria-label="关闭窗口"><svg width="12" height="14"><path d="M1.500 3l8.500 9M10 3l-8.500 9" stroke="#000" strokeWidth="2.200" /></svg></MdiButton>
        </MdiButtons>
      </MenuBar>
      <UploadButton><UploadMark><CloudMark /></UploadMark><UploadText>拖拽上传</UploadText></UploadButton>

      <ToolRow>
        <ToolGroup>
          <Grip />
          <IconButton aria-label="新建"><NewIcon /></IconButton>
          <IconButton aria-label="新建预算书"><NewSheetIcon /></IconButton>
          <IconButton aria-label="打开"><OpenIcon /></IconButton>
          <CaretButton aria-label="最近文件"><Caret /></CaretButton>
          <IconButton aria-label="保存"><SaveIcon /></IconButton>
          <IconButton aria-label="关闭文件"><CloseFolderIcon /></IconButton>
        </ToolGroup>
        <ToolGroup>
          <Grip />
          <IconButton aria-label="剪切"><CutIcon /></IconButton>
          <IconButton aria-label="复制"><CopyIcon /></IconButton>
          <IconButton aria-label="粘贴"><PasteIcon /></IconButton>
          <IconButton aria-label="删除"><DeleteIcon /></IconButton>
          <Divider />
          <IconButton aria-label="撤销"><UndoIcon /></IconButton>
          <CaretButton aria-label="撤销列表"><Caret /></CaretButton>
          <IconButton aria-label="恢复"><RedoIcon /></IconButton>
          <CaretButton $dim aria-label="恢复列表"><Caret /></CaretButton>
        </ToolGroup>
        <ToolGroup>
          <Grip />
          <LabelButton><CheckTableIcon />符合性检查</LabelButton>
          <LabelButton><SettingIcon />预算书设置</LabelButton>
          <Divider />
          <LabelButton><PropertyIcon />属性窗口</LabelButton>
          <Divider />
          <LabelButton><SumIcon />局部汇总</LabelButton>
          <LabelButton $menu="far"><PlansIcon />多方案报价<Caret /></LabelButton>
          <LabelButton><ReportIcon />报表</LabelButton>
        </ToolGroup>
        <ToolGroup>
          <Grip />
          <IconButton aria-label="第一条"><Grey d="M4 3h2v14H4zM15 3v14l-8-7z" /></IconButton>
          <IconButton aria-label="上一条"><Grey d="M13 3v14l-7-7z" /></IconButton>
          <IconButton aria-label="下一条"><Grey d="M6 3v14l7-7z" /></IconButton>
          <IconButton aria-label="最后一条"><Grey d="M5 3v14l8-7zM14 3h2v14h-2z" /></IconButton>
        </ToolGroup>
        <ToolGroup>
          <Grip />
          <IconButton aria-label="升级"><ArrowIcon turn={0} /></IconButton>
          <IconButton aria-label="降级"><ArrowIcon turn={180} /></IconButton>
          <IconButton aria-label="上移"><ArrowIcon turn={90} /></IconButton>
          <IconButton aria-label="下移"><ArrowIcon turn={270} /></IconButton>
        </ToolGroup>
        <ToolGroup>
          <Grip />
          <IconButton aria-label="计算器"><CalcIcon /></IconButton>
          <IconButton aria-label="函数"><FxIcon /></IconButton>
          <IconButton aria-label="特殊符号"><ParaIcon /></IconButton>
          <IconButton aria-label="图元"><CubeIcon /></IconButton>
          <IconButton aria-label="列表"><ListIcon /></IconButton>
        </ToolGroup>
      </ToolRow>

      <Body>
        <Side>
          <SideTabs>
            <SideTab $active>项目结构</SideTab>
            <SideTab>查询</SideTab>
          </SideTabs>
          <SidePane>
            <SideInner>
              <SideHeading>预算书</SideHeading>
              <TreeBox>
                <Tree>
                  {tree.map(([name, level, last]) => (
                    <TreeRow key={name} $level={level} $last={last}>
                      {name === "建筑工程" && <TreeOpener aria-label="收起"><Chevron d="M2 3l4 5 4-5" /></TreeOpener>}
                      <TreeLabel $selected={name === "建筑工程"}>{name}</TreeLabel>
                    </TreeRow>
                  ))}
                </Tree>
                <ScrollBar>
                  <ScrollArrow aria-label="向左"><Chevron d="M8 1L4 6l4 5" /></ScrollArrow>
                  <ScrollThumb $share="72%" />
                  <ScrollArrow $end aria-label="向右"><Chevron d="M4 1l4 5-4 5" /></ScrollArrow>
                </ScrollBar>
              </TreeBox>
            </SideInner>
          </SidePane>
        </Side>
        <Splitter><SplitHandle /></Splitter>
        <Main>
          <MainTabs>
            <MainTab>造价分析</MainTab>
            <MainTab>工程概况</MainTab>
            <MainTab $active>预算书</MainTab>
            <MainTab>措施项目</MainTab>
            <MainTab>人材机汇总</MainTab>
            <MainTab>费用汇总</MainTab>
          </MainTabs>
          <ToolRow>
            <ToolGroup $flush>
              <TextButton $menu="far">插入<Caret /></TextButton>
              <TextButton $menu="far">添加<Caret /></TextButton>
              <TextButton $menu="near">补充<Caret /></TextButton>
              <TextButton $menu="far">查询<Caret /></TextButton>
              <TextButton $menu="far">存档<Caret /></TextButton>
              <IconButton aria-label="查找"><FindIcon /></IconButton>
              <Divider />
              <TextButton $menu="near">整理子目<Caret /></TextButton>
              <TextButton>批量换算</TextButton>
              <Divider />
              <TextButton $menu="near">其他<Caret /></TextButton>
              <Divider />
              <LabelButton $menu="near"><ExpandIcon />展开到<Caret /></LabelButton>
              <TextButton $menu="near">重用组价<Caret /></TextButton>
              <IconButton aria-label="填充颜色"><FillIcon /></IconButton>
              <CaretButton aria-label="选择填充颜色"><Caret /></CaretButton>
              <IconButton aria-label="字体颜色"><FontIcon /></IconButton>
              <CaretButton aria-label="选择字体颜色"><Caret /></CaretButton>
              <LabelButton $dim><ExtractIcon />提取图形工程量</LabelButton>
              <TextButton>协A</TextButton>
              <TextButton>协B</TextButton>
              <TextButton>协C</TextButton>
            </ToolGroup>
          </ToolRow>
          <GridFrame>
            <GridView>
              <Sheet>
                <colgroup>{columns.map(([n, w]) => <col key={n} width={w} />)}</colgroup>
                <thead>
                  <tr>{columns.map(([n]) => <HeadCell key={n} scope="col" $active={n === "工程量"}>{n}</HeadCell>)}</tr>
                </thead>
                <tbody>{rows.map((r, i) => <SheetRow key={i} r={r} />)}</tbody>
              </Sheet>
            </GridView>
            <ScrollBar>
              <ScrollArrow aria-label="向左滚动"><Chevron d="M8 1L4 6l4 5" /></ScrollArrow>
              <ScrollThumb $share="21px" />
              <ScrollArrow $end aria-label="向右滚动"><Chevron d="M4 1l4 5-4 5" /></ScrollArrow>
            </ScrollBar>
          </GridFrame>
        </Main>
      </Body>

      <StatusBar>
        <StatusCell>定额库: 湖南省建筑工程消耗量标准(2014)</StatusCell>
        <StatusCell>定额专业: 建筑工程</StatusCell>
        <StatusCell>当前分部: 混凝土与钢筋混凝土工程</StatusCell>
        <StatusCell />
      </StatusBar>
      <TaskBar>
        {taskIcons.map((icon, i) => <Task key={i} $active={i === 7} aria-label={`任务 ${i + 1}`}>{icon}</Task>)}
        <Tray>
          <TrayItem $size="loose" aria-label="显示隐藏的图标"><Svg s={10}><circle cx="10" cy="10" r="8" stroke="#fff" strokeWidth="3" /></Svg></TrayItem>
          <TrayItem aria-label="同步"><Svg s={12}><circle cx="10" cy="10" r="10" fill="#fff" /></Svg></TrayItem>
          <TrayItem aria-label="网盘"><Svg s={12}><circle cx="10" cy="10" r="10" fill="#1487f5" /></Svg></TrayItem>
          <TrayItem aria-label="显卡"><Svg s={18}><rect x="0" y="1" width="20" height="16" fill="#666" /></Svg></TrayItem>
          <TrayItem aria-label="电源"><Svg s={12}><rect x="2" y="0" width="16" height="16" fill="#aaa" /></Svg></TrayItem>
          <TrayItem aria-label="网络"><Svg s={10}><path d="M2 8l8-6 8 6" stroke="#fff" strokeWidth="3" /></Svg></TrayItem>
          <TrayItem $size="loose" aria-label="音量"><Svg s={10}><path d="M10 2v12" stroke="#999" strokeWidth="2" /></Svg></TrayItem>
          <TrayItem $size="wide" aria-label="输入法"><Svg s={20}><rect x="0" y="1" width="20" height="16" fill="#11b5f3" /></Svg></TrayItem>
          <Clock>12:06</Clock>
          <TrayItem $size="wide" aria-label="通知"><Svg s={20}><rect x="1" y="2" width="18" height="14" stroke="#fff" strokeWidth="1.500" /></Svg></TrayItem>
          <DesktopEdge />
        </Tray>
      </TaskBar>
      <ImeBox><Paw />英</ImeBox>
    </Shell>
  );
}
